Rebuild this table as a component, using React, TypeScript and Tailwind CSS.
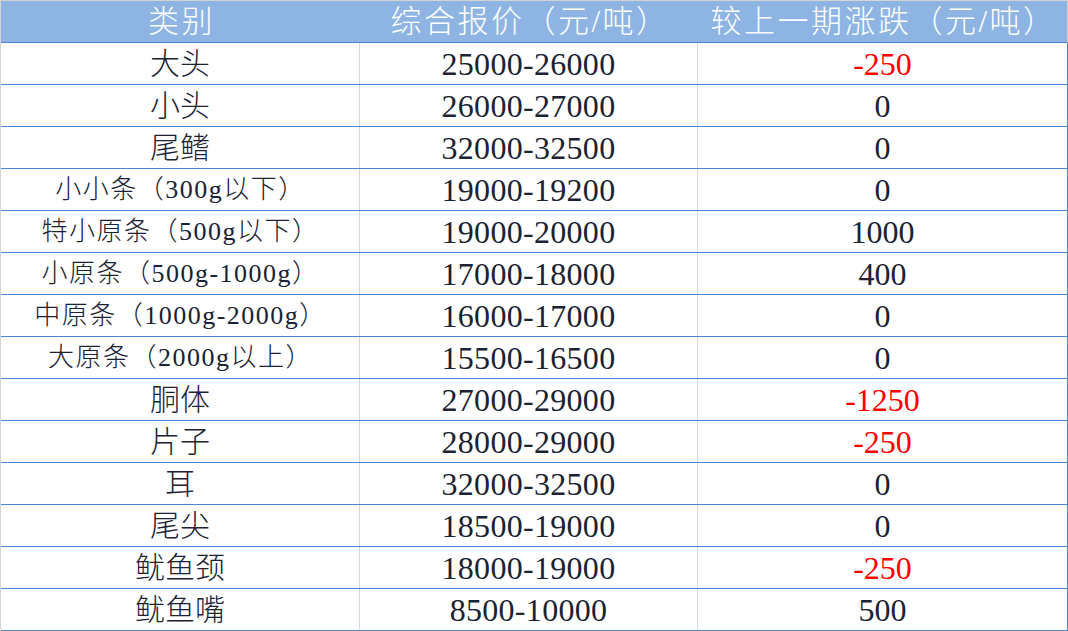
import React from "react";

type Row = { name: string; small?: boolean; price: string; change: string };

const rows: Row[] = [
  { name: "大头", price: "25000-26000", change: "-250" },
  { name: "小头", price: "26000-27000", change: "0" },
  { name: "尾鳍", price: "32000-32500", change: "0" },
  { name: "小小条（300g以下）", small: true, price: "19000-19200", change: "0" },
  { name: "特小原条（500g以下）", small: true, price: "19000-20000", change: "1000" },
  { name: "小原条（500g-1000g）", small: true, price: "17000-18000", change: "400" },
  { name: "中原条（1000g-2000g）", small: true, price: "16000-17000", change: "0" },
  { name: "大原条（2000g以上）", small: true, price: "15500-16500", change: "0" },
  { name: "胴体", price: "27000-29000", change: "-1250" },
  { name: "片子", price: "28000-29000", change: "-250" },
  { name: "耳", price: "32000-32500", change: "0" },
  { name: "尾尖", price: "18500-19000", change: "0" },
  { name: "鱿鱼颈", price: "18000-19000", change: "-250" },
  { name: "鱿鱼嘴", price: "8500-10000", change: "500" },
];

const font = { fontFamily: '"Liberation Serif", "Noto Sans CJK SC", serif' };

export default function App() {
  return (
    <div
      className="w-[1068px] h-[631px] bg-white border-t border-l border-[#d4d4d4] overflow-hidden"
      style={font}
    >
      <div className="grid grid-cols-[359px_338px_1fr] h-[42px] bg-[#8db4e2] border-b border-r border-b-[#4a86d4] border-r-[#d4d4d4] text-white text-[31px] font-light leading-none tracking-[2.5px]">
        <div className="flex items-center justify-center pl-[2px]">类别</div>
        <div className="flex items-center justify-center pl-[2px]">综合报价（元/吨）</div>
        <div className="flex items-center justify-center pl-[2px]">较上一期涨跌（元/吨）</div>
      </div>
      {rows.map((r, i) => (
        <div
          key={i}
          className="grid grid-cols-[359px_338px_1fr] h-[42px] border-b border-r border-[#4a86d4] text-[#1a2233] leading-none"
        >
          <div
            className={`flex items-center justify-center border-r border-[#d9d9d9] font-light ${
              r.small ? "text-[26px] tracking-[1.5px] pl-[1px]" : "text-[30px]"
            }`}
          >
            {r.name}
          </div>
          <div className="flex items-center justify-center border-r border-[#d9d9d9] text-[32px] tracking-[0.3px]">
            {r.price}
          </div>
          <div
            className={`flex items-center justify-center text-[32px] ${
              r.change.startsWith("-") ? "text-[#ff0000]" : ""
            }`}
          >
            {r.change}
          </div>
        </div>
      ))}
    </div>
  );
}
